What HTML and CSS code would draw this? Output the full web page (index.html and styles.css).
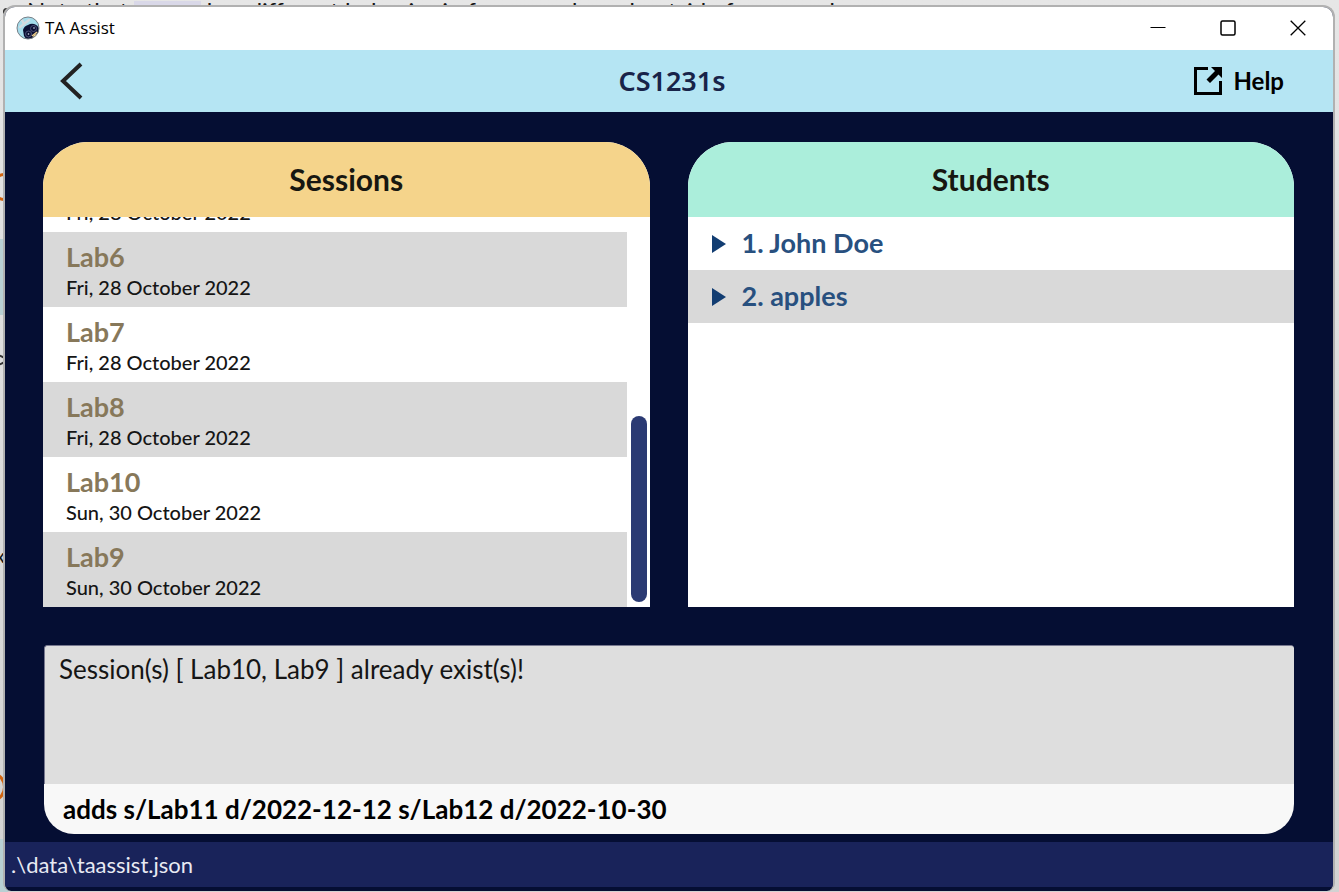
FILE: index.html
```html
<!DOCTYPE html>
<html lang="en">
<head>
<meta charset="utf-8">
<meta name="viewport" content="width=device-width, initial-scale=1">
<title>TA Assist</title>
<link rel="stylesheet" href="styles.css">
</head>
<body>
<div class="backdrop" aria-hidden="true">
  <p class="note">Note that <code>list</code> has different behavior in focus mode and outside focus mode.</p>
  <span class="dot dot-a"></span>
  <span class="dot dot-b"></span>
  <span class="dot dot-c"></span>
  <span class="dot dot-d"></span>
  <span class="dot dot-e"></span>
  <span class="ring ring-a"></span>
  <span class="ring ring-b"></span>
  <span class="ring ring-c"></span>
  <span class="stray">x</span>
  <span class="tint tint-a"></span>
  <span class="tint tint-b"></span>
</div>

<div class="window">
  <div class="titlebar">
    <svg class="app-icon" viewBox="0 0 24 24" aria-hidden="true">
      <defs><clipPath id="disc"><circle cx="12" cy="12" r="11"/></clipPath></defs>
      <g clip-path="url(#disc)">
        <rect width="24" height="24" fill="#a5ddec"/>
        <path d="M14 24 24 12V24Z" fill="#f3d18b"/>
        <path d="M4 11 8 8M8 8 6 4M8 8l5-4" stroke="#d3dadf" stroke-width="2.400" stroke-linecap="round"/>
        <path d="M7 14q1-4 5-5 3-2 6-1 4 1 5 5l-1 4-4 2-2 4-5 1-3-4Z" fill="#0b1033"/>
        <g fill="none" stroke="#4d5078" stroke-width="1"><circle cx="17.500" cy="12.500" r="3"/><circle cx="12.500" cy="18" r="3"/></g>
        <g fill="#dfe3f5"><circle cx="18" cy="12" r=".8"/><circle cx="12.500" cy="18" r=".8"/></g>
        <path d="m16 20 5-4" stroke="#f3d18b" stroke-width="1.500"/>
      </g>
      <circle cx="12" cy="12" r="11" fill="none" stroke="#777f86"/>
    </svg>
    <span class="app-name">TA Assist</span>
    <button class="win-btn" type="button" aria-label="Minimize"><svg viewBox="0 0 16 16"><path d="M.5 7.500h15"/></svg></button>
    <button class="win-btn" type="button" aria-label="Maximize"><svg viewBox="0 0 16 16"><rect x="1" y="1" width="14" height="14" rx="1.500" stroke-width="1.500"/></svg></button>
    <button class="win-btn" type="button" aria-label="Close"><svg viewBox="0 0 16 16"><path d="m.7.7 14.600 14.600M15.300.7.7 15.300" stroke-width="1.300"/></svg></button>
  </div>

  <header class="header">
    <button class="back" type="button" aria-label="Back"><svg viewBox="0 0 24 38"><path d="M21 2 3 19l18 17"/></svg></button>
    <h1 class="module">CS1231s</h1>
    <button class="help" type="button">
      <svg viewBox="0 0 30 30" aria-hidden="true">
        <path d="M15 2.500H2.500v25h25V15" fill="none" stroke="#000" stroke-width="3"/>
        <path d="M18 1h11v11l-3.500-3.500-8.500 8.500-3.500-3.500L22 5Z"/>
      </svg>
      <span>Help</span>
    </button>
  </header>

  <main class="content">
    <div class="panels">
      <section class="panel">
        <h2 class="panel-title sessions-title">Sessions</h2>
        <div class="panel-body">
          <ul class="sessions">
            <li class="session"><h3>Lab5</h3><p>Fri, 28 October 2022</p></li>
            <li class="session"><h3>Lab6</h3><p>Fri, 28 October 2022</p></li>
            <li class="session"><h3>Lab7</h3><p>Fri, 28 October 2022</p></li>
            <li class="session"><h3>Lab8</h3><p>Fri, 28 October 2022</p></li>
            <li class="session"><h3>Lab10</h3><p>Sun, 30 October 2022</p></li>
            <li class="session"><h3>Lab9</h3><p>Sun, 30 October 2022</p></li>
          </ul>
          <div class="track"><div class="thumb"></div></div>
        </div>
      </section>
      <section class="panel">
        <h2 class="panel-title students-title">Students</h2>
        <div class="panel-body">
          <ul class="students">
            <li><button class="student" type="button"><svg viewBox="0 0 14 18" aria-hidden="true"><path d="M0 0 14 9 0 18Z"/></svg><span>1. John Doe</span></button></li>
            <li><button class="student" type="button"><svg viewBox="0 0 14 18" aria-hidden="true"><path d="M0 0 14 9 0 18Z"/></svg><span>2. apples</span></button></li>
          </ul>
        </div>
      </section>
    </div>
    <div class="console">
      <textarea class="result" aria-label="Result" readonly>Session(s) [ Lab10, Lab9 ] already exist(s)!</textarea>
      <input class="command" type="text" aria-label="Command" value="adds s/Lab11 d/2022-12-12 s/Lab12 d/2022-10-30">
    </div>
  </main>

  <footer class="status">.\data\taassist.json</footer>
</div>
</body>
</html>
```

FILE: styles.css
```css
* { box-sizing: border-box; }
body {
  margin: 0;
  height: 100vh;
  display: flex;
  overflow: hidden;
  background: linear-gradient(#e6e6e6, #d2d2d2);
  font-family: Lato, "Liberation Sans", sans-serif;
  color: #151515;
}
h1, h2, h3, p, ul { margin: 0; padding: 0; }
ul { list-style: none; }
button { padding: 0; border: 0; background: none; font: inherit; color: inherit; }

/* Document behind the window */
.backdrop { position: absolute; inset: 0; overflow: hidden; }
.note {
  position: absolute;
  left: 27px;
  top: -5px;
  font-size: 24px;
  line-height: 32px;
  white-space: nowrap;
}
.note code { padding: 2px 8px; background: #d9d8e8; font-family: "Liberation Mono", monospace; font-size: 21px; }
.dot { position: absolute; left: 3px; width: 7px; height: 7px; border-radius: 50%; background: #333; }
.dot-a { top: 8px; }
.dot-b { top: 46px; }
.dot-c { top: 416px; }
.dot-d { top: 489px; }
.dot-e { top: 608px; }
.ring { position: absolute; left: -18px; width: 24px; height: 28px; border: 3px solid #d2640f; border-radius: 50%; }
.ring-a { top: 173px; left: -8px; }
.ring-b { top: 773px; }
.ring-c { top: 354px; height: 12px; border: 2px solid #333; }
.stray { position: absolute; left: -5px; top: 543px; font-size: 20px; line-height: 24px; }
.tint { position: absolute; left: 0; width: 8px; background: #b9d0d3; }
.tint-a { top: 239px; height: 76px; }
.tint-b { top: 839px; bottom: 0; }

.window {
  position: relative;
  flex: 1;
  min-width: 0;
  margin: 5px 4px 1px 3px;
  display: flex;
  flex-direction: column;
  border: 2px solid #b1b1b1;
  border-bottom: 0;
  border-radius: 12px 12px 8px 8px;
  overflow: hidden;
  background: #050e33;
}

.titlebar { flex: none; display: flex; align-items: center; height: 43px; padding: 0 0 2px 11px; background: #fff; }
.app-icon { width: 24px; height: 24px; }
.app-name { flex: 1; margin-left: 5px; font: 17px/24px "Open Sans", sans-serif; color: #000; }
.win-btn { width: 70px; height: 41px; display: grid; place-items: center; }
.win-btn svg { width: 16px; height: 16px; fill: none; stroke: #000; }

.header {
  flex: none;
  display: grid;
  grid-template-columns: 1fr auto 1fr;
  align-items: center;
  height: 62px;
  padding: 0 49px 0 55px;
  background: #b5e5f3;
}
.back { justify-self: start; display: flex; }
.back svg { width: 24px; height: 38px; fill: none; stroke: #222; stroke-width: 4; }
.module { font: 600 27px/40px "Noto Sans", sans-serif; color: #182349; }
.help { justify-self: end; display: flex; align-items: center; gap: 10px; font-size: 24px; line-height: 30px; font-weight: 700; color: #000; }
.help svg { width: 30px; height: 30px; }

.content { flex: 1; min-height: 0; display: flex; flex-direction: column; gap: 38px; padding: 30px 39px 8px 38px; }
.panels { flex: 1; min-height: 0; display: grid; grid-template-columns: 1fr 1fr; grid-template-rows: minmax(0, 1fr); gap: 38px; }
.panel { min-height: 0; display: flex; flex-direction: column; border-radius: 45px 45px 0 0; overflow: hidden; background: #fff; }
.panel-title { flex: none; height: 75px; text-align: center; font-size: 30px; line-height: 74px; font-weight: 700; color: #171711; }
.sessions-title { background: #f5d48b; }
.students-title { background: #abeedb; }
.panel-body { flex: 1; min-height: 0; display: flex; overflow: hidden; }

/* Scrolled to the end: earlier sessions run off the top */
.sessions { flex: 1; display: flex; flex-direction: column; justify-content: flex-end; }
.session { flex: none; height: 75px; padding: 8px 23px; }
.session:nth-child(even) { background: #d9d9d9; }
.session h3 { font-size: 27px; line-height: 34px; font-weight: 700; color: #87785a; }
.session p { font-size: 20px; line-height: 26px; font-weight: 500; }
.track { width: 23px; display: flex; flex-direction: column; align-items: center; justify-content: flex-end; padding: 5px 0 5px 2px; }
.thumb { width: 16px; height: 49%; border-radius: 8px; background: #2b3a73; }

.students { flex: 1; }
.student { width: 100%; height: 53px; display: flex; align-items: center; gap: 16px; padding-left: 24px; font-size: 27px; line-height: 32px; font-weight: 700; color: #28507f; }
.student span { padding-bottom: 2px; }
.students li:nth-child(even) { background: #d9d9d9; }
.student svg { width: 14px; height: 18px; fill: #123d72; }

.console { flex: none; display: flex; flex-direction: column; margin-left: 1px; border-radius: 3px 3px 30px 30px; overflow: hidden; }
.result {
  display: block;
  height: 139px;
  padding: 6px 14px;
  border: 1px solid #77788f;
  border-width: 1px 0 0 1px;
  border-radius: 3px 3px 0 0;
  background: #dedede;
  font: 26px/34px Lato, sans-serif;
  color: #151515;
  resize: none;
  outline: 0;
}
.command { height: 50px; padding: 0 19px; border: 0; background: #f8f8f8; font: 700 26px/34px Lato, sans-serif; color: #000; outline: 0; }

.status { flex: none; height: 45px; margin-bottom: 4px; padding: 0 6px; background: #19235a; font-size: 22px; line-height: 46px; color: #e8eaf3; }
```
